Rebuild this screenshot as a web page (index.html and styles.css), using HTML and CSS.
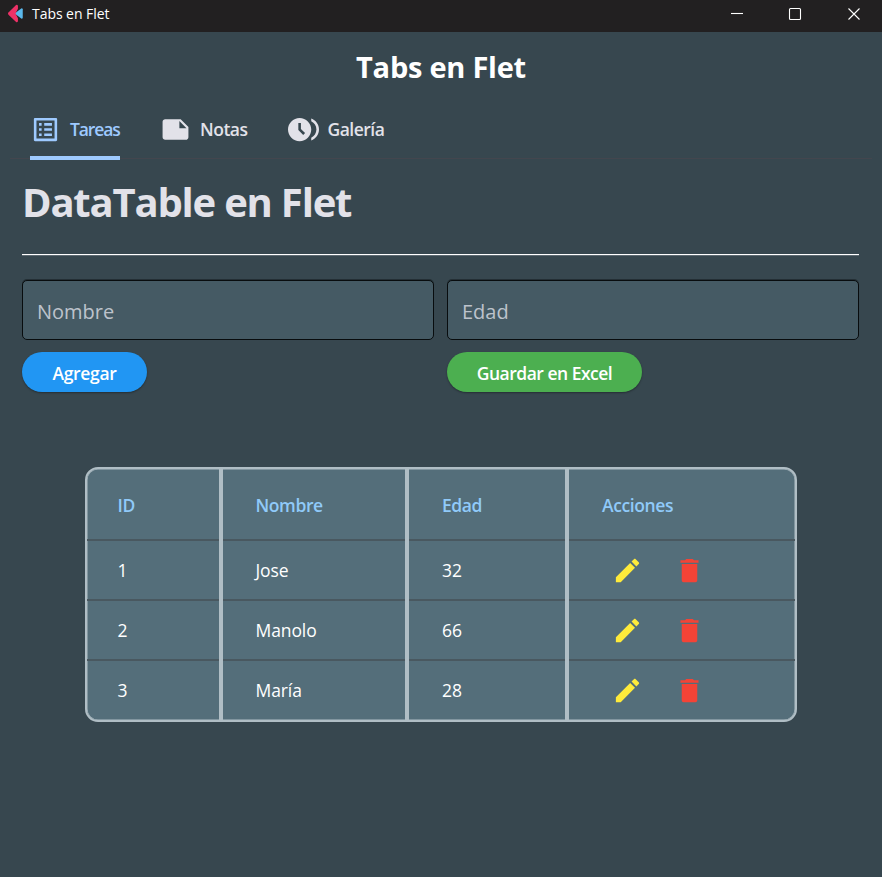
FILE: index.html
```html
<!DOCTYPE html>
<html lang="es">
<head>
<meta charset="utf-8">
<title>Tabs en Flet</title>
<link rel="stylesheet" href="styles.css">
</head>
<body>
<svg class="defs" aria-hidden="true">
  <symbol id="edit" viewBox="0 0 24 24"><path d="M3 17.25V21h3.75L17.81 9.94l-3.75-3.75L3 17.25zM20.71 7.04c.39-.39.39-1.02 0-1.41l-2.34-2.34c-.39-.39-1.02-.39-1.41 0l-1.83 1.83 3.75 3.75 1.83-1.83z"/></symbol>
  <symbol id="delete" viewBox="0 0 24 24"><path d="M6 19.500c0 .9.600 1.500 1.500 1.500h9c.9 0 1.500-.6 1.500-1.500V7H6v12.500zM19 4h-3.5l-1-1h-5l-1 1H5v2h14V4z"/></symbol>
</svg>
<header class="titlebar">
  <svg class="logo" width="16" height="20" viewBox="0 0 16 20"><path fill="#5bb8ec" d="M7 10l7.500-5.500q1.200 0 1.200 1v9q0 1-1.200 1z"/><path fill="#ee3167" d="M0.500 8.800L8.600 1q1.400-.7 2 .8V5L8 10l2.600 5v3.200q-.6 1.500-2 .8L.5 11.200q-1-1.200 0-2.400z"/></svg>
  <span class="window-name">Tabs en Flet</span>
  <div class="controls">
    <svg width="14" height="14" viewBox="0 0 14 14"><path d="M1 6.500h12"/></svg>
    <svg width="14" height="14" viewBox="0 0 14 14"><rect x="1.500" y="1.500" width="11" height="11" rx="1"/></svg>
    <svg width="14" height="14" viewBox="0 0 14 14"><path d="M1.500 1.500l11 11M12.500 1.500l-11 11"/></svg>
  </div>
</header>
<main>
  <h1 class="page-title"><span>Tabs en Flet</span></h1>
  <nav class="tabs">
    <a class="tab active"><svg class="icon" viewBox="0 0 24 24"><path d="M19 5v14H5V5h14m1.100-2H3.900c-.5 0-.9.4-.9.9v16.200c0 .4.400.9.900.9h16.200c.4 0 .9-.5.900-.9V3.900c0-.5-.5-.9-.9-.9zM11 7h6v2h-6V7zm0 4h6v2h-6v-2zm0 4h6v2h-6zM7 7h2v2H7zm0 4h2v2H7zm0 4h2v2H7z"/></svg><span>Tareas</span></a>
    <a class="tab notes"><svg class="icon" viewBox="0 0 24 24"><path d="M22 10l-6-6H4c-1.100 0-2 .9-2 2v12.010c0 1.100.9 1.990 2 1.990l16-.01c1.100 0 2-.89 2-2v-8zm-7-4.500l5.500 5.500H15V5.500z"/></svg><span>Notas</span></a>
    <a class="tab gallery"><svg class="icon" viewBox="0 0 24 24"><path d="M9 3c-4.960 0-9 4.040-9 9s4.040 9 9 9 9-4.040 9-9-4.040-9-9-9zm2.790 13.210L8 12.410V7h2v4.590l3.210 3.210-1.420 1.410zM17.990 3.520v2.160C20.360 6.800 22 9.210 22 12s-1.640 5.200-4.010 6.320v2.160C21.480 19.240 24 15.910 24 12s-2.520-7.240-6.010-8.480z"/></svg><span>Galería</span></a>
  </nav>
  <section class="panel">
    <h2 class="heading"><span>DataTable en Flet</span></h2>
    <div class="form">
      <div class="field">Nombre</div>
      <div class="field">Edad</div>
      <button class="button add">Agregar</button>
      <button class="button save">Guardar en Excel</button>
    </div>
    <div class="table">
      <div class="cell head">ID</div><div class="cell head">Nombre</div><div class="cell head">Edad</div><div class="cell head">Acciones</div>
      <div class="cell">1</div><div class="cell">Jose</div><div class="cell">32</div><div class="cell actions"><svg class="pen"><use href="#edit"/></svg><svg class="bin"><use href="#delete"/></svg></div>
      <div class="cell">2</div><div class="cell">Manolo</div><div class="cell">66</div><div class="cell actions"><svg class="pen"><use href="#edit"/></svg><svg class="bin"><use href="#delete"/></svg></div>
      <div class="cell">3</div><div class="cell">María</div><div class="cell">28</div><div class="cell actions"><svg class="pen"><use href="#edit"/></svg><svg class="bin"><use href="#delete"/></svg></div>
    </div>
  </section>
</main>
</body>
</html>
```
FILE: styles.css
```css
* { box-sizing: border-box; }
body {
  margin: 0;
  height: 877px;
  overflow: hidden;
  background: #37474f;
  color: #fff;
  font-family: "Segoe UI", "Open Sans", "Noto Sans", sans-serif;
  font-size: 17.5px;
}
.defs { display: none; }
.titlebar {
  display: flex;
  align-items: center;
  height: 32px;
  padding: 0 21px 4px 8px;
  background: #222021;
}
.logo { height: 19px; width: 15px; margin-top: -2px; }
.window-name { margin: -2px 0 0 9px; font-size: 14px; letter-spacing: -0.05px; }
.controls { display: flex; gap: 44px; margin: -1px 0 0 auto; }
.controls svg { fill: none; stroke: #fff; stroke-width: 1.1; }
.controls svg:nth-child(2) { margin-right: 1px; }
.page-title {
  margin: 0;
  height: 70px;
  line-height: 69px;
  text-align: center;
  font-size: 29px;
  font-weight: 700;
  letter-spacing: -0.25px;
}
.tabs {
  display: flex;
  height: 57px;
  margin: 0 10px;
  padding-left: 20px;
  border-bottom: 1px solid #43464e;
  color: #e2e2e9;
  font-weight: 600;
}
.tab {
  display: flex;
  align-items: center;
  height: 58px;
  padding-bottom: 4px;
  white-space: nowrap;
}
.tab span { margin: 0 0 0 9px; letter-spacing: -0.5px; }
.active {
  width: 90px;
  color: #9ecaff;
  background: linear-gradient(#9ecaff, #9ecaff) bottom / 100% 4px no-repeat;
}
.active span { letter-spacing: -1.1px; }
.notes { width: 86px; margin-left: 40px; }
.gallery { margin-left: 41.5px; }
.icon { width: 31px; height: 31px; flex: none; fill: currentColor; }
.panel { padding: 0 23px 0 22px; }
.heading {
  margin: 0;
  height: 96px;
  line-height: 86px;
  border-bottom: 1px solid #fff;
  box-shadow: 0 1px rgba(255, 255, 255, 0.2);
  color: #e2e2e9;
  font-size: 40px;
  font-weight: 700;
  letter-spacing: -1.2px;
  white-space: nowrap;
}
.form {
  display: grid;
  grid-template-columns: 412px 412px;
  gap: 12px 13px;
  margin-top: 25px;
  justify-items: start;
}
.field {
  width: 412px;
  height: 60px;
  padding: 4px 14px 0;
  border: 1px solid #080c0e;
  border-radius: 5px;
  background: #455a64;
  color: #bdc3cc;
  font-size: 20px;
  line-height: 53px;
  box-shadow: 0 -1px rgba(8, 12, 14, 0.4);
}
.button {
  height: 40px;
  padding: 2px 0 0;
  border: 0;
  border-radius: 20px;
  color: #fff;
  font-family: inherit;
  font-size: 17.5px;
  font-weight: 600;
  letter-spacing: -0.5px;
  box-shadow: 0 1px 2px rgba(0, 0, 0, 0.35);
}
.add { width: 125px; background: #2196f3; letter-spacing: -0.3px; }
.save { width: 195px; background: #4caf50; }
.table {
  display: grid;
  grid-template-columns: 136px 186px 160px 226px;
  grid-template-rows: 70px 60px 60px 61px;
  width: 712px;
  margin: 75px 0 0 63px;
  border: 2px solid #b0bec5;
  border-radius: 13px;
  background: #546e7a;
  box-shadow: inset 0 0 0 0.5px #b0bec5;
  overflow: hidden;
}
.cell {
  display: flex;
  align-items: center;
  padding: 1px 0 0 32.5px;
  border-right: 4px solid #b0bec5;
  letter-spacing: -0.1px;
  box-shadow: inset 0 2px #495860;
}
.cell:nth-child(4n + 1) { padding-left: 30.5px; }
.cell:nth-child(4n) { border-right: 0; padding-left: 33px; }
.cell:nth-child(4n + 3) { padding-left: 33px; }
.cell.head {
  padding-top: 2px;
  color: #90caf9;
  font-weight: 600;
  letter-spacing: -0.4px;
  box-shadow: none;
}
.cell.actions { padding: 2px 0 0 42.5px; }
.cell:nth-child(n + 13) { padding-bottom: 1px; }
.pen, .bin { width: 31px; height: 31px; fill: #ffeb3b; }
.bin { margin-left: 31.5px; fill: #f44336; }
```
